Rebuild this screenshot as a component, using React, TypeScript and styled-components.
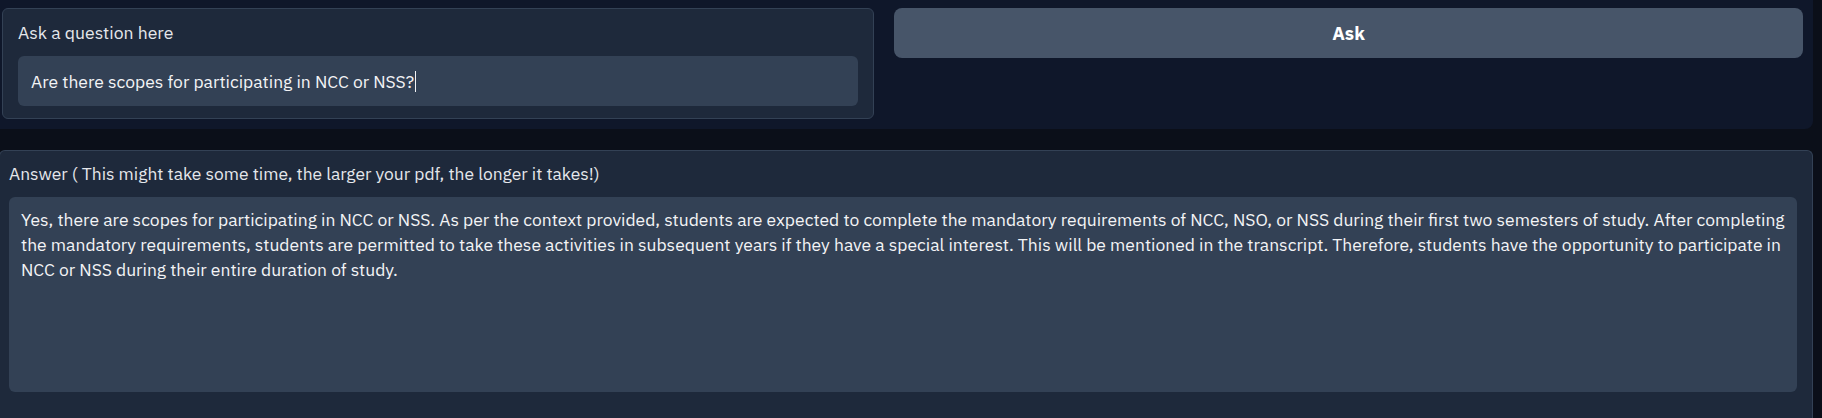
import React from "react";
import styled, { createGlobalStyle } from "styled-components";

const Global = createGlobalStyle`
  html, body { margin: 0; padding: 0; background: #0b0f19; }
  body { font-family: "IBM Plex Sans", Roboto, "Liberation Sans", sans-serif; -webkit-font-smoothing: antialiased; }
  * { box-sizing: border-box; }
`;

const Page = styled.div`
  width: 1822px;
  height: 418px;
  padding-right: 9px;
  display: flex;
  flex-direction: column;
  gap: 21px;
  overflow: hidden;
`;

const TopRow = styled.div`
  display: flex;
  align-items: flex-start;
  gap: 20px;
  padding: 8px 10px 10px 2px;
  background: #0f172a;
  border-bottom-right-radius: 8px;
`;

const Panel = styled.div`
  width: 872px;
  flex: none;
  display: flex;
  flex-direction: column;
  padding: 12px 15px;
  background: #1e293b;
  border: 1px solid #334155;
  border-radius: 6px;
`;

const Label = styled.div`
  font-size: 17.6px;
  line-height: 24px;
  color: #e5e7eb;
  margin-bottom: 11px;
  white-space: nowrap;
`;

const Input = styled.div`
  height: 50px;
  display: flex;
  align-items: center;
  padding: 0 13px;
  background: #334155;
  border-radius: 6px;
  font-size: 17.5px;
  color: #f3f4f6;
  white-space: nowrap;
`;

const Caret = styled.span`
  display: inline-block;
  width: 1px;
  height: 21px;
  margin-left: 1px;
  background: #f3f4f6;
`;

const AskButton = styled.button`
  flex: 1;
  height: 50px;
  border: none;
  border-radius: 8px;
  background: #475569;
  color: #ffffff;
  font-family: inherit;
  font-size: 18.5px;
  font-weight: 700;
  cursor: pointer;
`;

const AnswerPanel = styled.div`
  flex: 1;
  margin-left: -1px;
  display: flex;
  flex-direction: column;
  padding: 11px 15px 0 9px;
  background: #1e293b;
  border: 1px solid #334155;
  border-bottom: none;
  border-radius: 6px 6px 0 0;
`;

const AnswerLabel = styled(Label)`
  font-size: 17.45px;
`;

const AnswerBox = styled.div`
  height: 195px;
  padding: 10px 12px;
  background: #334155;
  border-radius: 6px;
  font-size: 17.5px;
  line-height: 25px;
  color: #f3f4f6;
`;

const Line = styled.span`
  display: block;
  white-space: nowrap;
`;

const answerLines = [
  "Yes, there are scopes for participating in NCC or NSS. As per the context provided, students are expected to complete the mandatory requirements of NCC, NSO, or NSS during their first two semesters of study. After completing",
  "the mandatory requirements, students are permitted to take these activities in subsequent years if they have a special interest. This will be mentioned in the transcript. Therefore, students have the opportunity to participate in",
  "NCC or NSS during their entire duration of study.",
];

export default function App() {
  return (
    <>
      <Global />
      <Page>
        <TopRow>
          <Panel>
            <Label>Ask a question here</Label>
            <Input>
              Are there scopes for participating in NCC or NSS?
              <Caret />
            </Input>
          </Panel>
          <AskButton>Ask</AskButton>
        </TopRow>
        <AnswerPanel>
          <AnswerLabel>Answer ( This might take some time, the larger your pdf, the longer it takes!)</AnswerLabel>
          <AnswerBox>
            {answerLines.map((l) => (
              <Line key={l}>{l}</Line>
            ))}
          </AnswerBox>
        </AnswerPanel>
      </Page>
    </>
  );
}
